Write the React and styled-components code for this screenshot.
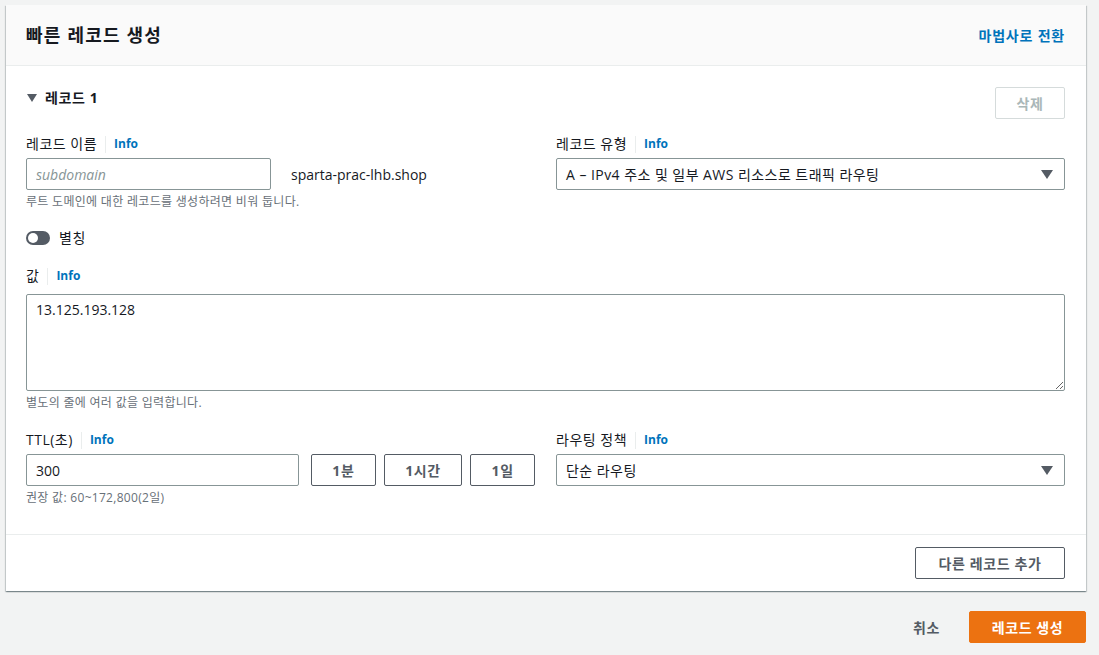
import React from "react";
import styled, { createGlobalStyle } from "styled-components";

const Global = createGlobalStyle`
  body {
    margin: 0;
    background: #f2f3f3;
    font-family: "Open Sans", "Noto Sans CJK KR", sans-serif;
    font-size: 14px;
    color: #16191f;
  }
  * { box-sizing: border-box; }
`;

const Page = styled.div`
  padding: 5px 13px 0 6px;
`;

const Panel = styled.div`
  background: #fff;
  box-shadow: 0 1px 1px 0 rgba(0, 28, 36, 0.3), 1px 1px 1px 0 rgba(0, 28, 36, 0.15),
    -1px 1px 1px 0 rgba(0, 28, 36, 0.15);
`;

const Header = styled.div`
  height: 61px;
  background: #fafafa;
  border-bottom: 1px solid #eaeded;
  display: flex;
  align-items: center;
  justify-content: space-between;
  padding: 0 21px 0 20px;
`;

const Title = styled.h2`
  margin: 0;
  font-size: 18px;
  font-weight: 700;
  line-height: 22px;
  letter-spacing: 1.2px;
`;

const LinkText = styled.a`
  color: #0073bb;
  font-weight: 700;
  font-size: 14px;
  letter-spacing: 0.8px;
  text-decoration: none;
  cursor: pointer;
`;

const Body = styled.div`
  padding: 21px 21px 28px 20px;
`;

const RecordHeader = styled.div`
  display: flex;
  justify-content: space-between;
  align-items: flex-start;
  height: 32px;
`;

const RecordTitle = styled.div`
  display: flex;
  align-items: center;
  gap: 8px;
  font-weight: 700;
  line-height: 22px;
  letter-spacing: 0.6px;
  padding-left: 1px;
`;

const Caret = styled.span`
  width: 0;
  height: 0;
  border-left: 5px solid transparent;
  border-right: 5px solid transparent;
  border-top: 8px solid #545b64;
`;

const Button = styled.button`
  height: 32px;
  padding: 0 ${(p) => p.$px || 12}px;
  width: ${(p) => p.$w}px;
  margin-left: ${(p) => p.$ml || 0}px;
  background: #fff;
  border: 1px solid ${(p) => (p.disabled ? "#d5dbdb" : "#545b64")};
  color: ${(p) => (p.disabled ? "#aab7b8" : "#545b64")};
  border-radius: 2px;
  font-family: inherit;
  font-size: 14px;
  font-weight: 700;
  letter-spacing: 0.6px;
  cursor: pointer;
`;

const Grid = styled.div`
  display: grid;
  grid-template-columns: 509px 509px;
  column-gap: 21px;
  margin-top: ${(p) => p.$mt || 0}px;
`;

const Field = styled.div`
  display: flex;
  flex-direction: column;
  margin-top: ${(p) => p.$mt || 0}px;
`;

const LabelRow = styled.div`
  display: flex;
  align-items: center;
  line-height: 22px;
  padding-top: 1px;
  margin-bottom: ${(p) => p.$mb || 3}px;
`;

const LabelText = styled.span`
  color: #16191f;
  letter-spacing: 0.5px;
`;

const Sep = styled.span`
  width: 1px;
  height: 17px;
  background: #eaeded;
  margin: 0 8px;
`;

const Info = styled.span`
  color: #0073bb;
  font-weight: 700;
  font-size: 12px;
`;

const Row = styled.div`
  display: flex;
  align-items: center;
  gap: ${(p) => p.$gap || 0}px;
`;

const TextInput = styled.input`
  width: ${(p) => p.$w}px;
  height: 32px;
  border: 1px solid #879596;
  border-radius: 2px;
  padding: 0 9px;
  font-family: inherit;
  font-size: 14px;
  color: #16191f;
  &::placeholder {
    color: #879596;
    font-style: italic;
  }
`;

const Suffix = styled.span`
  margin-left: 20px;
  color: #16191f;
`;

const Help = styled.div`
  font-size: 12px;
  line-height: 16px;
  color: #687078;
  letter-spacing: 0.3px;
  margin-top: 4px;
`;

const SelectBox = styled.div`
  height: 32px;
  border: 1px solid #879596;
  border-radius: 2px;
  display: flex;
  align-items: center;
  justify-content: space-between;
  padding: 0 11px 0 9px;
  color: #16191f;
  letter-spacing: 0.45px;
`;

const SelectCaret = styled.span`
  width: 0;
  height: 0;
  border-left: 6px solid transparent;
  border-right: 6px solid transparent;
  border-top: 9px solid #545b64;
`;

const ToggleRow = styled.div`
  display: flex;
  align-items: center;
  gap: 9px;
  line-height: 22px;
  margin-top: 17px;
  letter-spacing: 0.5px;
`;

const Toggle = styled.span`
  position: relative;
  width: 24px;
  height: 14px;
  border-radius: 7px;
  background: #545b64;
  &::after {
    content: "";
    position: absolute;
    top: 2px;
    left: 2px;
    width: 10px;
    height: 10px;
    border-radius: 50%;
    background: #fff;
  }
`;

const TextArea = styled.textarea`
  width: 100%;
  height: 97px;
  border: 1px solid #879596;
  border-radius: 2px;
  padding: 5px 9px;
  font-family: inherit;
  font-size: 14px;
  line-height: 20px;
  color: #16191f;
  resize: vertical;
  display: block;
`;

const PanelFooter = styled.div`
  border-top: 1px solid #eaeded;
  padding: 12px 21px 12px 20px;
  display: flex;
  justify-content: flex-end;
`;

const Actions = styled.div`
  display: flex;
  justify-content: flex-end;
  align-items: center;
  gap: 29px;
  margin-top: 20px;
`;

const PlainButton = styled.button`
  background: none;
  border: none;
  font-family: inherit;
  font-size: 14px;
  font-weight: 700;
  letter-spacing: 0.6px;
  color: #545b64;
  padding: 0;
  cursor: pointer;
`;

const Primary = styled.button`
  height: 32px;
  width: 117px;
  background: #ec7211;
  border: 1px solid #ec7211;
  border-radius: 2px;
  color: #fff;
  font-family: inherit;
  font-size: 14px;
  font-weight: 700;
  letter-spacing: 0.6px;
  cursor: pointer;
`;

const Label = ({ children, mb }) => (
  <LabelRow $mb={mb}>
    <LabelText>{children}</LabelText>
    <Sep />
    <Info>Info</Info>
  </LabelRow>
);

export default function App() {
  return (
    <Page>
      <Global />
      <Panel>
        <Header>
          <Title>빠른 레코드 생성</Title>
          <LinkText>마법사로 전환</LinkText>
        </Header>
        <Body>
          <RecordHeader>
            <RecordTitle>
              <Caret />
              레코드 1
            </RecordTitle>
            <Button disabled $w={70}>
              삭제
            </Button>
          </RecordHeader>
          <Grid $mt={13}>
            <Field>
              <Label>레코드 이름</Label>
              <Row>
                <TextInput $w={245} placeholder="subdomain" />
                <Suffix>sparta-prac-lhb.shop</Suffix>
              </Row>
              <Help>루트 도메인에 대한 레코드를 생성하려면 비워 둡니다.</Help>
            </Field>
            <Field>
              <Label>레코드 유형</Label>
              <SelectBox>
                A – IPv4 주소 및 일부 AWS 리소스로 트래픽 라우팅
                <SelectCaret />
              </SelectBox>
            </Field>
          </Grid>
          <ToggleRow>
            <Toggle />
            별칭
          </ToggleRow>
          <Field $mt={15}>
            <Label mb={7}>값</Label>
            <TextArea defaultValue="13.125.193.128" />
            <Help>별도의 줄에 여러 값을 입력합니다.</Help>
          </Field>
          <Grid $mt={17}>
            <Field>
              <Label>TTL(초)</Label>
              <Row $gap={8}>
                <TextInput $w={275} defaultValue="300" />
                <Button $w={65} $ml={4}>1분</Button>
                <Button $w={79}>1시간</Button>
                <Button $w={65}>1일</Button>
              </Row>
              <Help>권장 값: 60~172,800(2일)</Help>
            </Field>
            <Field>
              <Label>라우팅 정책</Label>
              <SelectBox>
                단순 라우팅
                <SelectCaret />
              </SelectBox>
            </Field>
          </Grid>
        </Body>
        <PanelFooter>
          <Button $w={150}>다른 레코드 추가</Button>
        </PanelFooter>
      </Panel>
      <Actions>
        <PlainButton>취소</PlainButton>
        <Primary>레코드 생성</Primary>
      </Actions>
    </Page>
  );
}
